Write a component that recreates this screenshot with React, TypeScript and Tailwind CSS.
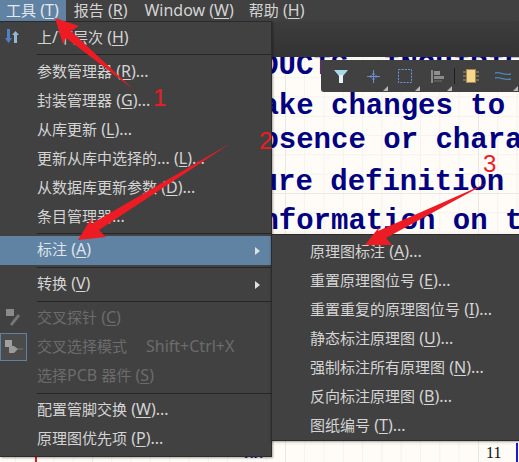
import React from "react";

type Item = { pre: string; key_: string; post: string };

// Latin runs are set a touch larger than the CJK runs, as in the reference's font pairing.
const Mixed = ({ text }: { text: string }) => (
  <>
    {text.split(/([\u0000-\u02ff]+)/).map((part, i) =>
      i % 2 === 1 ? (
        <span key={i} className="text-[16px]">{part}</span>
      ) : (
        <span key={i}>{part}</span>
      )
    )}
  </>
);

const L = ({ pre, key_, post }: Item) => (
  <span className="whitespace-pre">
    <Mixed text={pre} />
    <span className="underline underline-offset-2 decoration-1 text-[16px]">{key_}</span>
    <Mixed text={post} />
  </span>
);

const Row = ({ pre, key_, post, disabled, active, arrow, icon, shortcut }: Item & { disabled?: boolean; active?: boolean; arrow?: boolean; icon?: React.ReactNode; shortcut?: string }) => (
  <div className={`h-[29px] flex items-center pl-[37px] pb-[3px] relative ${active ? "bg-[#6082a3] text-[#dfe4ea]" : ""} ${disabled ? "text-[#6c6c6c]" : ""}`}>
    {icon}
    <L pre={pre} key_={key_} post={post} />
    {shortcut && <span className="ml-[19px] text-[16px]">{shortcut}</span>}
    {arrow && <span className="absolute right-[11px] top-[11px] w-0 h-0 border-y-[4px] border-y-transparent border-l-[5px] border-l-[#e0e0e0]" />}
  </div>
);

const Sep = ({ h }: { h: string }) => (
  <div className={`${h} flex flex-col pl-[37px]`}>
    <div className="h-px bg-[#262626]" />
  </div>
);

const Corner = () => <span className="absolute right-[1px] bottom-[1px] w-0 h-0 border-l-[5px] border-l-transparent border-b-[5px] border-b-[#b8b8b8]" />;

const Slot = ({ children, corner = true }: { children: React.ReactNode; corner?: boolean }) => (
  <div className="w-[32px] h-full relative flex items-center justify-center">
    {children}
    {corner && <Corner />}
  </div>
);

export default function App() {
  const lineCls = "whitespace-pre h-[29px] leading-[29px]";
  return (
    <div className="w-[519px] h-[462px] relative overflow-hidden flex flex-col bg-[#fffcf8] text-[15px] text-[#d4d4d4] [font-family:'Noto_Sans','Noto_Sans_CJK_SC',sans-serif]">
      {/* menu bar */}
      <div className="h-[21px] shrink-0 bg-[#414141] flex items-center gap-[2px] leading-[21px]">
        <div className="bg-[#6082a3] pl-[6px] pr-[7px] text-[#e4e8ec]"><L pre="工具 (" key_="T" post=")" /></div>
        <div className="pl-[6px] pr-[9px]"><L pre="报告 (" key_="R" post=")" /></div>
        <div className="pl-[6px] pr-[7px]"><L pre="Window (" key_="W" post=")" /></div>
        <div className="pl-[6px] pr-[9px]"><L pre="帮助 (" key_="H" post=")" /></div>
      </div>
      {/* second bar */}
      <div className="h-[36px] shrink-0 bg-gradient-to-b from-[#3d3d3d] to-[#333333]" />

      {/* canvas */}
      <div className="flex-1 relative overflow-hidden bg-[#fffcf8] bg-[linear-gradient(to_right,#ebe7e1_1px,transparent_1px),linear-gradient(to_bottom,#ebe7e1_1px,transparent_1px),linear-gradient(to_right,#f5f1eb_1px,transparent_1px),linear-gradient(to_bottom,#f5f1eb_1px,transparent_1px)] bg-[size:193px_193px,193px_193px,19.3px_19.3px,19.3px_19.3px] bg-[position:92px_0,0_136px,14.8px_0.9px,14.8px_0.9px]">
        <div className="flex flex-col text-[29px] font-bold text-[#000080] [font-family:'Liberation_Mono',monospace]">
          <div className={`${lineCls} -mt-[5px] pl-[209px]`}>PRODUCTS, INQUIRIES</div>
          <div className={`${lineCls} mt-[11px] pl-[244px]`}>make changes to the</div>
          <div className={`${lineCls} mt-[5px] pl-[244px]`}>absence or characteristics</div>
          <div className={`${lineCls} mt-[13px] pl-[191px]`}>feature definition of</div>
          <div className={`${lineCls} mt-[10px] pl-[244px]`}>information on the</div>
        </div>
      </div>

      {/* bottom sheet frame bits */}
      <div className="absolute left-[35px] top-[456px] w-[2px] h-[6px] bg-[#e02020]" />
      <div className="absolute left-[516px] top-[443px] w-[2px] h-[19px] bg-[#1a1ad0]" />
      <div className="absolute left-[486px] top-[443px] text-[16px] leading-[20px] text-[#111] [font-family:'Liberation_Serif',serif]">11</div>
      <div className="absolute left-[244px] top-[447px] text-[13px] leading-[14px] text-[#000080] [font-family:'Liberation_Serif',serif]">KK</div>

      {/* floating toolbar */}
      <div className="absolute left-[321px] top-[60px] w-[198px] h-[32px] bg-[#414141] rounded-bl-[3px] pl-[4px] flex items-center">
        <Slot corner={false}>
          <svg width="14" height="13" viewBox="0 0 14 13"><path d="M0 0H14L9 6V13H5V6Z" fill="#a8d8e8" /><path d="M5 5H9V13H5Z" fill="#e4f2f7" /></svg>
        </Slot>
        <Slot>
          <svg width="15" height="15" viewBox="0 0 15 15" fill="none" stroke="#6a8fd0"><path d="M7.5 1V14M1 7.5H14" /><path d="M5 6V9M10 6V9M6 5H9M6 10H9" /></svg>
        </Slot>
        <Slot>
          <svg width="14" height="14" viewBox="0 0 14 14" fill="none"><rect x="0.5" y="0.5" width="13" height="13" stroke="#6f96e0" strokeDasharray="2 1.2" /></svg>
        </Slot>
        <Slot>
          <svg width="13" height="13" viewBox="0 0 13 13"><rect x="0" y="0" width="2" height="13" fill="#8a8a8a" /><rect x="3" y="1" width="6" height="4" fill="#8f8f8f" /><rect x="3" y="6" width="10" height="3" fill="#8a8a8a" /><path d="M3 11H11" stroke="#777" /></svg>
        </Slot>
        <div className="w-px h-[16px] ml-px bg-[#1e1e1e] shrink-0" />
        <Slot corner={false}>
          <svg width="16" height="14" viewBox="0 0 16 14"><rect x="3.5" y="0.5" width="9" height="13" fill="#f7d78b" stroke="#a58a4f" /><path d="M0 3H3M0 7H3M0 11H3M13 3H16M13 7H16M13 11H16" stroke="#b09a5c" /></svg>
        </Slot>
        <Slot>
          <svg width="16" height="10" viewBox="0 0 16 10" fill="none" stroke="#4d86b8" strokeWidth="1.4"><path d="M0 2C5 0 8 5 16 3" /><path d="M0 7C5 5 8 10 16 8" /></svg>
        </Slot>
      </div>

      {/* tools menu */}
      <div className="absolute left-0 top-[21px] w-[272px] h-[436px] bg-[#414141] border-r border-b border-t border-[#2b2b2b] pt-[2px] shadow-[1px_1px_2px_rgba(0,0,0,0.35)]">
        <Row pre="上/下层次 (" key_="H" post=")" icon={
          <svg className="absolute left-[5px] top-[5px]" width="14" height="14" viewBox="0 0 14 14"><path d="M2 0H5V9H7L3.5 14L0 9H2Z" fill="#4f80c8" /><path d="M9 14H12V6H14L10.5 2L7 6H9Z" fill="#93b7d4" /></svg>
        } />
        <Sep h="h-[5px] pt-px" />
        <Row pre="参数管理器 (" key_="R" post=")..." />
        <Row pre="封装管理器 (" key_="G" post=")..." />
        <Row pre="从库更新 (" key_="L" post=")..." />
        <Row pre="更新从库中选择的... (" key_="L" post=")..." />
        <Row pre="从数据库更新参数 (" key_="D" post=")..." />
        <Row pre="条目管理器..." key_="" post="" />
        <Sep h="h-[4px] pt-px" />
        <Row pre="标注 (" key_="A" post=")" active arrow />
        <Sep h="h-[5px] pt-[2px]" />
        <Row pre="转换 (" key_="V" post=")" arrow />
        <Sep h="h-[5px] pt-[2px]" />
        <Row pre="交叉探针 (" key_="C" post=")" disabled icon={
          <svg className="absolute left-[6px] top-[5px]" width="14" height="18" viewBox="0 0 14 18"><rect x="0" y="0" width="8" height="7" fill="#8a8a8a" /><path d="M4 15L12 5L14 7L6 17Z" fill="#777" /></svg>
        } />
        <Row pre="交叉选择模式" key_="" post="" disabled shortcut="Shift+Ctrl+X" icon={
          <span className="absolute left-0 top-0 w-[27px] h-[28px] bg-[#4b4b4b] border border-[#5f82a3] flex items-center justify-center">
            <svg width="18" height="14" viewBox="0 0 18 14"><rect x="0" y="0" width="7" height="7" fill="#a0a0a0" /><path d="M4 6H9L13 9L9 13H4Z" fill="#9a9a9a" /><path d="M13 9H18" stroke="#777" /></svg>
          </span>
        } />
        <Row pre="选择PCB 器件 (" key_="S" post=")" disabled />
        <Sep h="h-[5px] pt-[2px]" />
        <Row pre="配置管脚交换 (" key_="W" post=")..." />
        <Row pre="原理图优先项 (" key_="P" post=")..." />
      </div>

      {/* annotate submenu */}
      <div className="absolute left-[271px] top-[234px] w-[248px] h-[207px] bg-[#414141] border-t border-l border-b border-[#2b2b2b] pt-[3px] shadow-[0_1px_2px_rgba(0,0,0,0.35)]">
        <div className="[&>div]:pl-[38px]">
          <Row pre="原理图标注 (" key_="A" post=")..." />
          <Row pre="重置原理图位号 (" key_="E" post=")..." />
          <Row pre="重置重复的原理图位号 (" key_="I" post=")..." />
          <Row pre="静态标注原理图 (" key_="U" post=")..." />
          <Row pre="强制标注所有原理图 (" key_="N" post=")..." />
          <Row pre="反向标注原理图 (" key_="B" post=")..." />
          <Row pre="图纸编号 (" key_="T" post=")..." />
        </div>
      </div>

      {/* annotation arrows */}
      <svg className="absolute left-0 top-0 pointer-events-none" width="519" height="462" viewBox="0 0 519 462">
        <polygon points="55,18 79,26 71,31 133,89 66,38 63,44" fill="#ed1c24" />
        <polygon points="78,240 106,237 99,230 231,143 91,224 92,217" fill="#ed1c24" />
        <polygon points="365,245 392,245 386,238 487,183 378,231 380,226" fill="#ed1c24" />
      </svg>
      <div className="absolute left-[153px] top-[84px] text-[24px] leading-[28px] text-[#ed1c24] font-light [font-family:'Liberation_Sans',sans-serif]">1</div>
      <div className="absolute left-[259px] top-[127px] text-[24px] leading-[28px] text-[#ed1c24] font-light [font-family:'Liberation_Sans',sans-serif]">2</div>
      <div className="absolute left-[483px] top-[150px] text-[24px] leading-[28px] text-[#ed1c24] font-light [font-family:'Liberation_Sans',sans-serif]">3</div>
    </div>
  );
}
